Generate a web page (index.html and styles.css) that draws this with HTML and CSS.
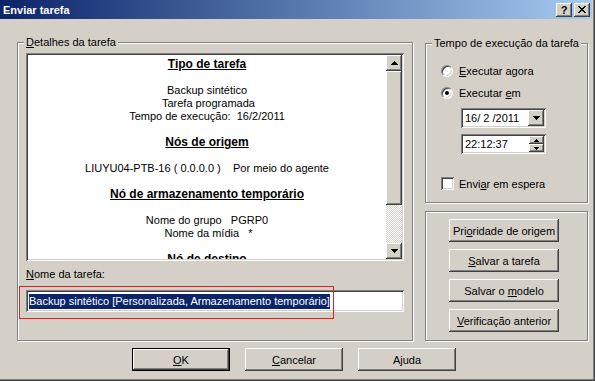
FILE: index.html
```html
<!DOCTYPE html>
<html lang="pt">
<head>
<meta charset="UTF-8">
<title>Enviar tarefa</title>
<link rel="stylesheet" href="styles.css">
</head>
<body>

<div class="window">
    <div class="titlebar">
        <span class="title">Enviar tarefa</span>
        <div class="caption-buttons">
            <div class="caption-btn raised">?</div>
            <div class="caption-btn raised">
                <svg width="8" height="7" viewBox="0 0 8 7" shape-rendering="crispEdges"><path d="M0 0h2v1H0z M6 0h2v1H6z M1 1h2v1H1z M5 1h2v1H5z M2 2h4v1H2z M3 3h2v1H3z M2 4h4v1H2z M1 5h2v1H1z M5 5h2v1H5z M0 6h2v1H0z M6 6h2v1H6z"/></svg>
            </div>
        </div>
    </div>

    <div class="main">
        <div class="group details-group">
            <span class="group-title"><u>D</u>etalhes da tarefa</span>
            <div class="details-box sunken">
                <div class="details-text">
                    <div class="heading">Tipo de tarefa</div>
                    <div class="lines">
                        <div>Backup sintético</div>
                        <div> Tarefa programada</div>
                        <div>Tempo de execução:  16/2/2011</div>
                    </div>
                    <div class="heading">Nós de origem</div>
                    <div class="lines">
                        <div>LIUYU04-PTB-16 ( 0.0.0.0 )    Por meio do agente</div>
                    </div>
                    <div class="heading">Nó de armazenamento temporário</div>
                    <div class="lines">
                        <div>Nome do grupo   PGRP0</div>
                        <div> Nome da mídia   *</div>
                    </div>
                    <div class="heading">Nó de destino</div>
                </div>
                <div class="scrollbar">
                    <div class="scroll-btn raised">
                        <svg width="7" height="4" viewBox="0 0 7 4" shape-rendering="crispEdges"><path d="M3 0h1v1H3z M2 1h3v1H2z M1 2h5v1H1z M0 3h7v1H0z"/></svg>
                    </div>
                    <div class="scroll-thumb raised"></div>
                    <div class="scroll-track"></div>
                    <div class="scroll-btn raised">
                        <svg width="7" height="4" viewBox="0 0 7 4" shape-rendering="crispEdges"><path d="M0 0h7v1H0z M1 1h5v1H1z M2 2h3v1H2z M3 3h1v1H3z"/></svg>
                    </div>
                </div>
            </div>
            <div class="field-label"><u>N</u>ome da tarefa:</div>
            <div class="name-input sunken">
                <span class="selected">Backup sintético [Personalizada, Armazenamento temporário]</span>
                <div class="mark"></div>
            </div>
        </div>

        <div class="side">
            <div class="group time-group">
                <span class="group-title">Tempo de execução da tarefa</span>
                <div class="option">
                    <span class="radio"></span>
                    <span><u>E</u>xecutar agora</span>
                </div>
                <div class="option">
                    <span class="radio on"></span>
                    <span>Executar <u>e</u>m</span>
                </div>
                <div class="date-field sunken">
                    <span class="field-value">16/ 2 /2011</span>
                    <div class="drop-btn raised">
                        <svg width="7" height="4" viewBox="0 0 7 4" shape-rendering="crispEdges"><path d="M0 0h7v1H0z M1 1h5v1H1z M2 2h3v1H2z M3 3h1v1H3z"/></svg>
                    </div>
                </div>
                <div class="time-field sunken">
                    <span class="field-value">22:12:37</span>
                    <div class="spin">
                        <div class="spin-btn raised">
                            <svg width="5" height="3" viewBox="0 0 5 3" shape-rendering="crispEdges"><path d="M2 0h1v1H2z M1 1h3v1H1z M0 2h5v1H0z"/></svg>
                        </div>
                        <div class="spin-btn raised">
                            <svg width="5" height="3" viewBox="0 0 5 3" shape-rendering="crispEdges"><path d="M0 0h5v1H0z M1 1h3v1H1z M2 2h1v1H2z"/></svg>
                        </div>
                    </div>
                </div>
                <div class="option check-option">
                    <span class="checkbox sunken"></span>
                    <span>Envi<u>a</u>r em espera</span>
                </div>
            </div>

            <div class="group actions-group">
                <div class="button raised"><span>Pri<u>o</u>ridade de origem</span></div>
                <div class="button raised"><span><u>S</u>alvar a tarefa</span></div>
                <div class="button raised"><span>Salvar o <u>m</u>odelo</span></div>
                <div class="button raised"><span><u>V</u>erificação anterior</span></div>
            </div>
        </div>
    </div>

    <div class="footer">
        <div class="button raised default"><span><u>O</u>K</span></div>
        <div class="button raised"><span><u>C</u>ancelar</span></div>
        <div class="button raised"><span>A<u>j</u>uda</span></div>
    </div>
</div>

</body>
</html>
```

FILE: styles.css
```css
* {
    box-sizing: border-box;
}

body {
    margin: 0;
    font-family: "Liberation Sans", Arial, sans-serif;
    font-size: 11px;
    color: #000;
    background-color: #d4d0c8;
}

u {
    text-decoration: underline;
}

.window {
    width: 595px;
    height: 381px;
    background-color: #d4d0c8;
    box-shadow: inset -1px -1px #404040, inset -2px -2px #808080;
    overflow: hidden;
}

/* 3D edges */
.raised {
    background-color: #d4d0c8;
    box-shadow: inset -1px -1px #404040, inset 1px 1px #fff, inset -2px -2px #808080, inset 2px 2px #d4d0c8;
}

.sunken {
    background-color: #fff;
    box-shadow: inset 1px 1px #808080, inset -1px -1px #fff, inset 2px 2px #404040, inset -2px -2px #d4d0c8;
}

.titlebar {
    height: 19px;
    margin-right: 3px;
    padding: 0 2px 0 3px;
    display: flex;
    align-items: center;
    justify-content: space-between;
    background: linear-gradient(to right, #0a246a, #a6caf0);
}

.title {
    color: #fff;
    font-weight: bold;
    font-size: 11px;
}

.caption-buttons {
    display: flex;
    gap: 2px;
}

.caption-btn {
    width: 16px;
    height: 14px;
    display: flex;
    justify-content: center;
    align-items: center;
    font-weight: bold;
    font-size: 11px;
    line-height: 14px;
}

.main {
    display: flex;
    margin-top: 23px;
    padding-left: 17px;
}

.group {
    position: relative;
    border: 1px solid #808080;
    box-shadow: inset 1px 1px #fff, 1px 1px #fff;
}

.group-title {
    position: absolute;
    top: -7px;
    left: 6px;
    padding: 0 2px;
    line-height: 13px;
    background-color: #d4d0c8;
    white-space: nowrap;
}

.details-group {
    width: 396px;
    height: 299px;
    padding: 10px 8px 0 8px;
}

.details-box {
    width: 378px;
    height: 208px;
    padding: 2px;
    display: flex;
}

.details-text {
    flex: 1;
    overflow: hidden;
    padding-top: 3px;
    text-align: center;
    line-height: 13px;
}

.details-text .heading,
.details-text .lines div {
    white-space: pre;
}

.heading {
    font-weight: bold;
    font-size: 12px;
    text-decoration: underline;
    margin-bottom: 13px;
}

.lines {
    margin-bottom: 13px;
}

.scrollbar {
    width: 16px;
    display: flex;
    flex-direction: column;
}

.scroll-btn {
    height: 16px;
    display: flex;
    justify-content: center;
    align-items: center;
}

.scroll-thumb {
    height: 134px;
}

.scroll-track {
    flex: 1;
    background: repeating-conic-gradient(#fff 0 25%, #d4d0c8 0 50%) 0 0 / 2px 2px;
}

.field-label {
    margin-top: 7px;
    line-height: 13px;
}

.name-input {
    position: relative;
    margin-top: 9px;
    width: 378px;
    height: 22px;
    padding: 0 3px;
    display: flex;
    align-items: center;
}

.selected {
    background-color: #0a246a;
    color: #fff;
    line-height: 15px;
    white-space: nowrap;
}

.mark {
    position: absolute;
    left: -7px;
    top: -4px;
    width: 315px;
    height: 33px;
    border: 1px solid #e8201c;
}

.side {
    margin-left: 12px;
    width: 163px;
}

.time-group {
    margin-top: 1px;
    height: 160px;
    padding: 20px 0 0 15px;
}

.option {
    display: flex;
    align-items: center;
    gap: 6px;
    height: 13px;
    margin-bottom: 9px;
}

.radio {
    position: relative;
    width: 12px;
    height: 12px;
    border-radius: 50%;
    background-color: #fff;
    border: 1px solid;
    border-color: #808080 #fff #fff #808080;
    box-shadow: inset 1px 1px #404040, inset -1px -1px #d4d0c8;
}

.radio.on::after {
    content: "";
    position: absolute;
    left: 3px;
    top: 3px;
    width: 4px;
    height: 4px;
    border-radius: 50%;
    background-color: #000;
}

.date-field,
.time-field {
    margin-left: 20px;
    width: 85px;
    height: 20px;
    padding: 2px;
    display: flex;
    align-items: center;
}

.date-field {
    margin-top: 5px;
}

.time-field {
    margin-top: 6px;
}

.field-value {
    flex: 1;
    padding-left: 2px;
    white-space: pre;
}

.drop-btn {
    width: 16px;
    height: 16px;
    display: flex;
    justify-content: center;
    align-items: center;
}

.spin {
    width: 15px;
    height: 16px;
    display: flex;
    flex-direction: column;
}

.spin-btn {
    height: 8px;
    display: flex;
    justify-content: center;
    align-items: center;
}

.check-option {
    margin-top: 23px;
    gap: 5px;
}

.checkbox {
    width: 13px;
    height: 13px;
}

.actions-group {
    margin-top: 8px;
    height: 130px;
    padding: 7px 0 0 23px;
    display: flex;
    flex-direction: column;
    gap: 7px;
}

.button {
    height: 23px;
    display: flex;
    justify-content: center;
    align-items: center;
    white-space: nowrap;
}

.actions-group .button {
    width: 110px;
}

.footer {
    display: flex;
    gap: 15px;
    margin-top: 7px;
    padding-left: 132px;
}

.footer .button {
    width: 98px;
}

.button.default {
    box-shadow: inset 0 0 0 1px #000, inset -2px -2px #404040, inset 2px 2px #fff, inset -3px -3px #808080;
}
```
